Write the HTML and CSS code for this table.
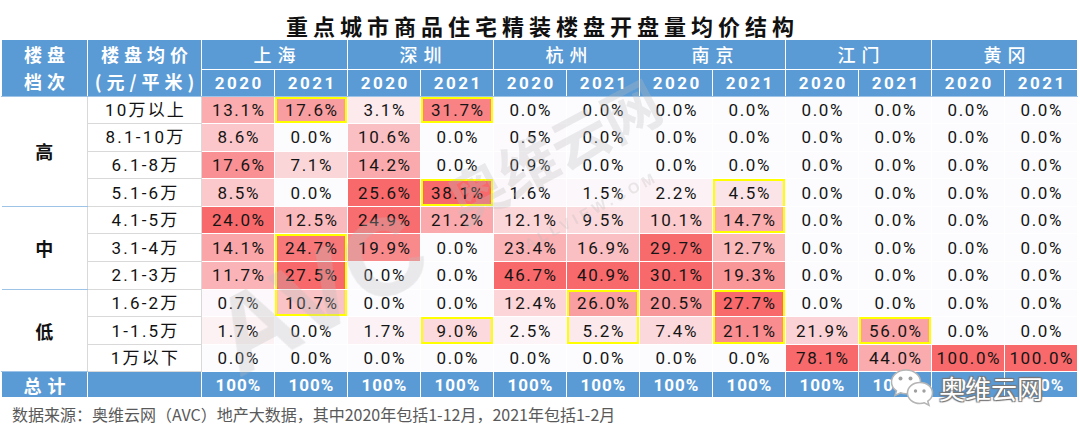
FILE: index.html
```html
<!DOCTYPE html>
<html lang="zh-CN">
<head>
<meta charset="utf-8">
<title>重点城市商品住宅精装楼盘开盘量均价结构</title>
<link rel="stylesheet" href="styles.css">
</head>
<body>
<div class="page">
  <h1 class="title">重点城市商品住宅精装楼盘开盘量均价结构</h1>
  <div class="table-wrap">
    <table class="grid">
      <colgroup>
        <col class="c-tier"><col class="c-range">
        <col class="c-val"><col class="c-val"><col class="c-val"><col class="c-val">
        <col class="c-val"><col class="c-val"><col class="c-val"><col class="c-val">
        <col class="c-val"><col class="c-val"><col class="c-val"><col class="c-val">
      </colgroup>
      <thead>
        <tr class="h1">
          <th rowspan="2" class="hl">楼盘<br>档次</th>
          <th rowspan="2" class="hl">楼盘均价<br>(元/平米)</th>
          <th colspan="2" class="city">上海</th>
          <th colspan="2" class="city">深圳</th>
          <th colspan="2" class="city">杭州</th>
          <th colspan="2" class="city">南京</th>
          <th colspan="2" class="city">江门</th>
          <th colspan="2" class="city">黄冈</th>
        </tr>
        <tr class="h2">
          <th class="yr">2020</th><th class="yr">2021</th>
          <th class="yr">2020</th><th class="yr">2021</th>
          <th class="yr">2020</th><th class="yr">2021</th>
          <th class="yr">2020</th><th class="yr">2021</th>
          <th class="yr">2020</th><th class="yr">2021</th>
          <th class="yr">2020</th><th class="yr">2021</th>
        </tr>
      </thead>
      <tbody>
        <tr>
          <td rowspan="4" class="tier">高</td>
          <td class="range">10万以上</td>
          <td class="v" style="background:rgb(250,172,174)">13.1%</td>
          <td class="v y-all" style="background:rgb(249,158,160)">17.6%</td>
          <td class="v" style="background:rgb(252,234,237)">3.1%</td>
          <td class="v y-all" style="background:rgb(249,130,132)">31.7%</td>
          <td class="v">0.0%</td><td class="v">0.0%</td><td class="v">0.0%</td><td class="v">0.0%</td>
          <td class="v">0.0%</td><td class="v">0.0%</td><td class="v">0.0%</td><td class="v">0.0%</td>
        </tr>
        <tr>
          <td class="range">8.1-10万</td>
          <td class="v" style="background:rgb(251,199,202)">8.6%</td>
          <td class="v">0.0%</td>
          <td class="v" style="background:rgb(250,191,194)">10.6%</td>
          <td class="v">0.0%</td>
          <td class="v" style="background:rgb(252,250,253)">0.5%</td>
          <td class="v">0.0%</td><td class="v">0.0%</td><td class="v">0.0%</td>
          <td class="v">0.0%</td><td class="v">0.0%</td><td class="v">0.0%</td><td class="v">0.0%</td>
        </tr>
        <tr>
          <td class="range">6.1-8万</td>
          <td class="v" style="background:rgb(249,144,147)">17.6%</td>
          <td class="v" style="background:rgb(251,214,217)">7.1%</td>
          <td class="v" style="background:rgb(250,170,173)">14.2%</td>
          <td class="v">0.0%</td>
          <td class="v" style="background:rgb(252,249,252)">0.9%</td>
          <td class="v">0.0%</td><td class="v">0.0%</td><td class="v">0.0%</td>
          <td class="v">0.0%</td><td class="v">0.0%</td><td class="v">0.0%</td><td class="v">0.0%</td>
        </tr>
        <tr class="group-end">
          <td class="range">5.1-6万</td>
          <td class="v" style="background:rgb(251,200,203)">8.5%</td>
          <td class="v">0.0%</td>
          <td class="v" style="background:rgb(248,105,107)">25.6%</td>
          <td class="v y-all" style="background:rgb(248,105,107)">38.1%</td>
          <td class="v" style="background:rgb(252,247,250)">1.6%</td>
          <td class="v" style="background:rgb(252,247,250)">1.5%</td>
          <td class="v" style="background:rgb(252,241,244)">2.2%</td>
          <td class="v y-top" style="background:rgb(251,228,231)">4.5%</td>
          <td class="v">0.0%</td><td class="v">0.0%</td><td class="v">0.0%</td><td class="v">0.0%</td>
        </tr>
        <tr>
          <td rowspan="3" class="tier">中</td>
          <td class="range">4.1-5万</td>
          <td class="v" style="background:rgb(248,105,107)">24.0%</td>
          <td class="v" style="background:rgb(250,185,188)">12.5%</td>
          <td class="v" style="background:rgb(248,109,111)">24.9%</td>
          <td class="v" style="background:rgb(250,170,173)">21.2%</td>
          <td class="v" style="background:rgb(251,214,217)">12.1%</td>
          <td class="v" style="background:rgb(251,218,221)">9.5%</td>
          <td class="v" style="background:rgb(251,203,205)">10.1%</td>
          <td class="v y-bot" style="background:rgb(250,174,176)">14.7%</td>
          <td class="v">0.0%</td><td class="v">0.0%</td><td class="v">0.0%</td><td class="v">0.0%</td>
        </tr>
        <tr>
          <td class="range">3.1-4万</td>
          <td class="v" style="background:rgb(250,166,168)">14.1%</td>
          <td class="v y-top" style="background:rgb(248,120,122)">24.7%</td>
          <td class="v" style="background:rgb(249,138,140)">19.9%</td>
          <td class="v">0.0%</td>
          <td class="v" style="background:rgb(250,178,181)">23.4%</td>
          <td class="v" style="background:rgb(250,191,194)">16.9%</td>
          <td class="v" style="background:rgb(248,107,109)">29.7%</td>
          <td class="v" style="background:rgb(250,185,187)">12.7%</td>
          <td class="v">0.0%</td><td class="v">0.0%</td><td class="v">0.0%</td><td class="v">0.0%</td>
        </tr>
        <tr>
          <td class="range">2.1-3万</td>
          <td class="v" style="background:rgb(250,180,183)">11.7%</td>
          <td class="v y-mid" style="background:rgb(248,105,107)">27.5%</td>
          <td class="v">0.0%</td>
          <td class="v">0.0%</td>
          <td class="v" style="background:rgb(248,105,107)">46.7%</td>
          <td class="v" style="background:rgb(248,105,107)">40.9%</td>
          <td class="v" style="background:rgb(248,105,107)">30.1%</td>
          <td class="v" style="background:rgb(249,150,152)">19.3%</td>
          <td class="v">0.0%</td><td class="v">0.0%</td><td class="v">0.0%</td><td class="v">0.0%</td>
        </tr>
        <tr>
          <td rowspan="3" class="tier">低</td>
          <td class="range">1.6-2万</td>
          <td class="v" style="background:rgb(252,248,251)">0.7%</td>
          <td class="v y-bot" style="background:rgb(250,195,197)">10.7%</td>
          <td class="v">0.0%</td>
          <td class="v">0.0%</td>
          <td class="v" style="background:rgb(251,213,216)">12.4%</td>
          <td class="v y-top" style="background:rgb(249,159,161)">26.0%</td>
          <td class="v" style="background:rgb(249,152,154)">20.5%</td>
          <td class="v y-top" style="background:rgb(248,105,107)">27.7%</td>
          <td class="v">0.0%</td><td class="v">0.0%</td><td class="v">0.0%</td><td class="v">0.0%</td>
        </tr>
        <tr>
          <td class="range">1-1.5万</td>
          <td class="v" style="background:rgb(252,242,244)">1.7%</td>
          <td class="v">0.0%</td>
          <td class="v" style="background:rgb(252,242,245)">1.7%</td>
          <td class="v y-all" style="background:rgb(251,217,220)">9.0%</td>
          <td class="v" style="background:rgb(252,244,247)">2.5%</td>
          <td class="v y-bot" style="background:rgb(251,233,236)">5.2%</td>
          <td class="v" style="background:rgb(251,216,219)">7.4%</td>
          <td class="v y-bot" style="background:rgb(249,140,142)">21.1%</td>
          <td class="v" style="background:rgb(251,211,214)">21.9%</td>
          <td class="v y-all" style="background:rgb(250,161,163)">56.0%</td>
          <td class="v">0.0%</td><td class="v">0.0%</td>
        </tr>
        <tr>
          <td class="range">1万以下</td>
          <td class="v">0.0%</td><td class="v">0.0%</td><td class="v">0.0%</td><td class="v">0.0%</td>
          <td class="v">0.0%</td><td class="v">0.0%</td><td class="v">0.0%</td><td class="v">0.0%</td>
          <td class="v" style="background:rgb(248,105,107)">78.1%</td>
          <td class="v" style="background:rgb(250,171,174)">44.0%</td>
          <td class="v" style="background:rgb(248,105,107)">100.0%</td>
          <td class="v" style="background:rgb(248,105,107)">100.0%</td>
        </tr>
      </tbody>
      <tfoot>
        <tr class="total">
          <td class="total-label">总计</td>
          <td></td>
          <td>100%</td><td>100%</td><td>100%</td><td>100%</td>
          <td>100%</td><td>100%</td><td>100%</td><td>100%</td>
          <td>100%</td><td>100%</td><td>100%</td><td>100%</td>
        </tr>
      </tfoot>
    </table>

    <svg class="watermark" width="1080" height="360" viewBox="0 0 1080 360" aria-hidden="true">
      <g class="wm-fill">
        <text class="wm-logo" transform="translate(238 338) rotate(-28)">AVC</text>
        <text class="wm-name" transform="translate(462 186) rotate(-28)">奥维云网</text>
        <text class="wm-url" transform="translate(528 210) rotate(-28)">ALLVIEW.COM</text>
      </g>
    </svg>

    <div class="badge">
      <svg class="wechat" width="46" height="40" viewBox="0 0 46 40" aria-hidden="true">
        <g class="bubble">
          <path d="M17 2 C8.5 2 2.5 7.8 2.5 14 C2.5 17.8 4.5 20.8 7.5 22.8 L6 27.5 L11.5 24.8 C13.2 25.4 15 25.7 17 25.7 C25.5 25.7 31.5 20 31.5 13.8 C31.5 7.7 25.5 2 17 2 Z"/>
          <path d="M31 14.5 C23.6 14.5 18.5 19.4 18.5 25 C18.5 30.6 23.6 35.5 31 35.5 C32.6 35.5 34 35.3 35.3 34.8 L40 37.2 L38.8 33.2 C41.6 31.3 43.5 28.4 43.5 25 C43.5 19.4 38.4 14.5 31 14.5 Z"/>
        </g>
        <g class="eyes">
          <circle cx="11.5" cy="10.5" r="2"/><circle cx="21.5" cy="10.5" r="2"/>
          <circle cx="26.5" cy="23" r="1.7"/><circle cx="35" cy="23" r="1.7"/>
        </g>
      </svg>
      <span class="badge-text">奥维云网</span>
    </div>
  </div>
  <p class="source">数据来源：奥维云网（AVC）地产大数据，其中2020年包括1-12月，2021年包括1-2月</p>
</div>
</body>
</html>
```

FILE: styles.css
```css
* { box-sizing: border-box; }

body {
  margin: 0;
  background: #ffffff;
  font-family: Roboto, "Noto Sans CJK SC", sans-serif;
  color: #111;
}

.page {
  width: 1080px;
}

.title {
  margin: 0;
  height: 40px;
  padding: 13px 0 0 5px;
  text-align: center;
  font-family: "Noto Sans CJK SC", sans-serif;
  font-size: 22px;
  line-height: 24px;
  font-weight: bold;
  letter-spacing: 5px;
  color: #111;
}

.table-wrap {
  position: relative;
  padding-left: 1px;
}

.grid {
  border-collapse: collapse;
  table-layout: fixed;
  width: 1076px;
}

.c-tier { width: 86px; }
.c-range { width: 114px; }
.c-val { width: 73px; }

.grid th,
.grid td {
  padding: 0;
  text-align: center;
  vertical-align: middle;
  white-space: nowrap;
}

/* header */
.grid th {
  background: #5b9bd5;
  color: #fff;
  font-family: "Noto Sans CJK SC", sans-serif;
  border-left: 1px solid #fff;
  border-right: 1px solid #fff;
  border-top: 0;
  border-bottom: 1px solid #fff;
}

.h1 { height: 29px; }
.h2 { height: 27px; }

.hl {
  font-size: 18px;
  line-height: 27px;
  font-weight: bold;
  letter-spacing: 5px;
  padding-left: 5px !important;
  border-bottom: 1px solid #9dc3e6 !important;
}

.city {
  font-size: 18px;
  line-height: 24px;
  font-weight: 500;
  letter-spacing: 6px;
  padding-left: 6px !important;
}

.yr {
  font-family: Roboto, sans-serif !important;
  font-size: 17px;
  line-height: 22px;
  font-weight: bold;
  letter-spacing: 2.5px;
  padding-left: 2.5px !important;
  border-bottom: 1px solid #9dc3e6 !important;
}

/* body */
tbody tr { height: 27.6px; }

.tier {
  background: #fff;
  font-family: "Noto Sans CJK SC", sans-serif;
  font-size: 18px;
  font-weight: bold;
  color: #111;
  border-right: 1px solid #d9d9d9;
  border-bottom: 1px solid #9dc3e6;
}

.range {
  background: #fff;
  font-size: 17px;
  line-height: 20px;
  letter-spacing: 2.2px;
  padding-left: 2px !important;
  color: #111;
  border-right: 1px solid #d9d9d9;
  border-bottom: 1px solid #d9d9d9;
}

.v {
  background: #fcfcff;
  font-size: 17px;
  line-height: 20px;
  letter-spacing: 1.6px;
  padding-left: 1.6px !important;
  color: #151515;
  border: 1px solid #fff;
}

.y-all { box-shadow: inset 2px 2px 0 #ffff00, inset -2px -2px 0 #ffff00; }
.y-top { box-shadow: inset 2px 2px 0 #ffff00, inset -2px 0 0 #ffff00; }
.y-mid { box-shadow: inset 2px 0 0 #ffff00, inset -2px 0 0 #ffff00; }
.y-bot { box-shadow: inset 2px -2px 0 #ffff00, inset -2px 0 0 #ffff00; }

/* total */
.total { height: 25px; }

.total td {
  background: #5b9bd5;
  color: #fff;
  font-size: 17px;
  line-height: 22px;
  font-weight: bold;
  letter-spacing: 1px;
  padding-left: 1px;
  border: 1px solid #fff;
  border-bottom: 0;
}

.total td.total-label {
  font-family: "Noto Sans CJK SC", sans-serif;
  font-size: 18px;
  letter-spacing: 6px;
  padding-left: 6px;
}

/* watermark */
.watermark {
  position: absolute;
  left: 0;
  top: 0;
  pointer-events: none;
}

.wm-fill {
  fill: #bdbdbd;
  opacity: 0.3;
  font-weight: bold;
}

.wm-logo {
  font-family: "Liberation Sans", sans-serif;
  font-size: 110px;
}

.wm-name {
  font-family: "Noto Sans CJK SC", sans-serif;
  font-size: 58px;
}

.wm-url {
  font-family: "Liberation Sans", sans-serif;
  font-size: 15px;
  letter-spacing: 4px;
}

/* wechat badge */
.badge {
  position: absolute;
  left: 889px;
  top: 328px;
  display: flex;
  align-items: center;
  gap: 4px;
}

.bubble path {
  fill: #ffffff;
  stroke: #b5b5b5;
  stroke-width: 1.5;
}

.eyes circle { fill: #a0a0a0; }

.badge-text {
  font-family: "Noto Sans CJK SC", sans-serif;
  font-size: 26px;
  line-height: 34px;
  color: #fff;
  text-shadow: 1px 1px 1px #777, -1px -1px 1px #777, 1px -1px 1px #777, -1px 1px 1px #777;
}

.source {
  margin: 0;
  padding: 5px 0 0 12px;
  font-family: "Noto Sans CJK SC", sans-serif;
  font-size: 16px;
  line-height: 24px;
  color: #595959;
}
```
